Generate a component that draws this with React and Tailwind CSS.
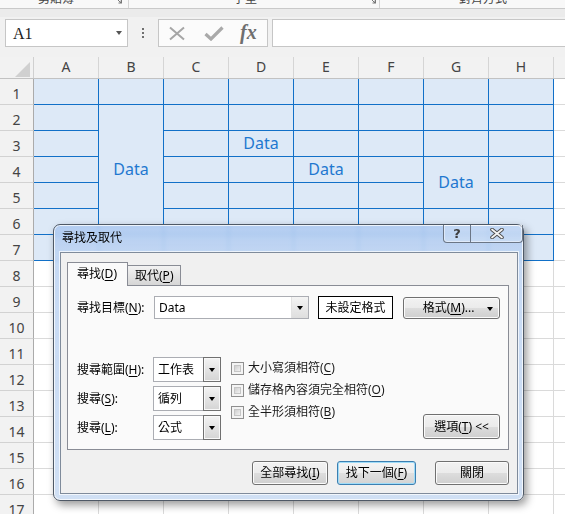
import React from "react";

const COLS = ["A", "B", "C", "D", "E", "F", "G", "H"];
const COVERED = { B3: 1, B4: 1, B5: 1, B6: 1, G5: 1 };
const DATA = { B2: 1, D3: 1, E4: 1, G4: 1 };

function U({ children }) {
  return <span className="underline decoration-1 underline-offset-[2px]">{children}</span>;
}

function Tri({ cls = "border-t-[#000]" }) {
  return (
    <span
      className={
        "block w-0 h-0 border-l-[3.5px] border-r-[3.5px] border-t-[4px] border-l-transparent border-r-transparent " +
        cls
      }
    />
  );
}

function Launcher() {
  return (
    <svg width="8" height="8" viewBox="0 0 8 8" className="block">
      <path d="M0.5 0.5H6.5V6.5" fill="none" stroke="#777" strokeWidth="1" />
      <path d="M2 2L6 6M3.5 6H6V3.5" fill="none" stroke="#777" strokeWidth="1" />
    </svg>
  );
}

const btn =
  "flex items-center justify-center rounded-[3px] border border-[#707070] bg-[linear-gradient(to_bottom,#f2f2f2_0%,#ebebeb_50%,#dddddd_50%,#cfcfcf_100%)] shadow-[inset_0_0_0_1px_#fbfbfb] text-[12px] leading-[14px] text-black";

function OptCombo({ value }) {
  return (
    <div className="flex w-[68px] h-[25px]">
      <div className="flex-1 border border-r-0 border-[#abadb3] bg-white flex items-center pl-[4px] text-[12px] leading-[14px]">
        {value}
      </div>
      <div className="w-[18px] border border-[#707070] bg-[linear-gradient(to_bottom,#f3f3f3,#d4d4d4)] shadow-[inset_0_0_0_1px_#f8f8f8] flex items-center justify-center">
        <Tri />
      </div>
    </div>
  );
}

function Check({ children }) {
  return (
    <div className="h-[22px] flex items-center">
      <div className="w-[13px] h-[13px] border border-[#8f8f8f] bg-[#f4f4f4] p-[2px]">
        <div className="w-full h-full border border-[#c6c6c6] bg-[linear-gradient(135deg,#cfcfcf,#f2f2f2)]" />
      </div>
      <span className="ml-[4px] text-[12px] leading-[14px] text-[#1a1a1a]">{children}</span>
    </div>
  );
}

function Dialog() {
  return (
    <div className="absolute left-[53px] top-[224px] w-[471px] h-[277px] rounded-[7px] border border-[#4f5966] bg-[linear-gradient(to_bottom,rgba(172,200,240,0.85),rgba(190,212,242,0.88)_30px,rgba(204,221,243,0.92))] backdrop-blur-[2px] shadow-[inset_0_0_0_1px_rgba(255,255,255,0.75),3px_4px_9px_rgba(0,0,0,0.4)] flex flex-col">
      <div className="h-[27px] flex items-start justify-between">
        <div className="pl-[8px] pt-[5px] text-[12px] leading-[16px] text-black">尋找及取代</div>
        <div className="h-[18px] flex border border-t-0 border-[#6b7686] rounded-b-[4px] bg-[rgba(255,255,255,0.18)] shadow-[inset_0_0_0_1px_rgba(255,255,255,0.45)]">
          <div className="w-[27px] border-r border-[#6b7686] flex items-center justify-center text-[13px] leading-none font-bold text-[#3d3d3d] font-['DejaVu_Sans',sans-serif]">
            ?
          </div>
          <div className="w-[51px] flex items-center justify-center">
            <svg width="14" height="11" viewBox="0 0 14 11">
              <path
                d="M2 1.5L12 9.5M12 1.5L2 9.5"
                stroke="#4a4a4a"
                strokeWidth="3.6"
                strokeLinecap="round"
              />
              <path
                d="M2 1.5L12 9.5M12 1.5L2 9.5"
                stroke="#f4f4f4"
                strokeWidth="1.8"
                strokeLinecap="round"
              />
            </svg>
          </div>
        </div>
      </div>

      <div className="ml-[6px] mr-[5px] h-[242px] border border-[#7f8b9b] bg-[#f0f0f0] shadow-[0_0_0_1px_rgba(255,255,255,0.7)] flex flex-col">
        {/* tabs */}
        <div className="h-[32px] pt-[9px] pl-[6px] flex items-end">
          <div className="relative z-10 -mb-[1px] w-[61px] h-[24px] border border-b-0 border-[#898c95] bg-[#fafafa] flex items-center pl-[9px] pb-[1px] text-[12px] leading-[14px]">
            尋找(<U>D</U>)
          </div>
          <div className="w-[53px] h-[20px] border border-l-0 border-b-0 border-[#898c95] bg-[linear-gradient(to_bottom,#f2f2f2,#d6d6d6)] flex items-center pl-[7px] text-[12px] leading-[14px]">
            取代(<U>P</U>)
          </div>
        </div>

        {/* panel */}
        <div className="ml-[6px] w-[442px] h-[165px] border border-[#898c95] bg-[#fafafa] pt-[10px] pl-[9px] pr-[8px] flex flex-col">
          <div className="flex items-center h-[23px]">
            <div className="w-[77px] text-[12px] leading-[14px]">
              尋找目標(<U>N</U>):
            </div>
            <div className="w-[155px] h-[23px] border border-[#abadb3] bg-white flex items-stretch">
              <div className="flex-1 flex items-center pl-[4px] text-[12px] leading-[14px]">Data</div>
              <div className="w-[17px] bg-[linear-gradient(to_bottom,#f4f4f4,#dedede)] border-l border-[#e2e2e2] flex items-center justify-center">
                <Tri />
              </div>
            </div>
            <div className="ml-[9px] w-[75px] h-[23px] border border-black bg-white flex items-center justify-center text-[12px] leading-[14px]">
              未設定格式
            </div>
            <div className={"ml-[10px] w-[97px] h-[22px] relative " + btn}>
              <span className="-ml-[6px]">
                格式(<U>M</U>)...
              </span>
              <span className="absolute right-[6px] top-[9px]">
                <Tri />
              </span>
            </div>
          </div>

          <div className="mt-[38px] flex items-end">
            <div className="flex flex-col gap-[4px]">
              <div className="flex items-center h-[25px]">
                <div className="w-[76px] text-[12px] leading-[14px]">
                  搜尋範圍(<U>H</U>):
                </div>
                <OptCombo value="工作表" />
              </div>
              <div className="flex items-center h-[25px]">
                <div className="w-[76px] text-[12px] leading-[14px]">
                  搜尋(<U>S</U>):
                </div>
                <OptCombo value="循列" />
              </div>
              <div className="flex items-center h-[25px]">
                <div className="w-[76px] text-[12px] leading-[14px]">
                  搜尋(<U>L</U>):
                </div>
                <OptCombo value="公式" />
              </div>
            </div>
            <div className="ml-[10px] self-start flex flex-col">
              <Check>
                大小寫須相符(<U>C</U>)
              </Check>
              <Check>
                儲存格內容須完全相符(<U>O</U>)
              </Check>
              <Check>
                全半形須相符(<U>B</U>)
              </Check>
            </div>
            <div className={"ml-auto mb-[1px] w-[77px] h-[25px] " + btn}>
              選項(<U>T</U>)&nbsp;&lt;&lt;
            </div>
          </div>
        </div>

        {/* bottom buttons */}
        <div className="mt-[11px] pr-[8px] flex justify-end">
          <div className={"w-[76px] h-[24px] " + btn}>
            全部尋找(<U>I</U>)
          </div>
          <div className="ml-[9px] w-[79px] h-[24px] flex items-center justify-center rounded-[3px] border border-[#3c7fb1] bg-[linear-gradient(to_bottom,#f4f4f4_0%,#ececec_50%,#e0e0e0_50%,#d3d3d3_100%)] shadow-[inset_0_0_0_1px_#9fdcf8] text-[12px] leading-[14px]">
            找下一個(<U>F</U>)
          </div>
          <div className={"ml-[19px] w-[74px] h-[24px] " + btn}>關閉</div>
        </div>
      </div>
    </div>
  );
}

function TopArea() {
  return (
    <div className="h-[57px] bg-[#f1f1f1] flex flex-col">
      <div className="h-[9px] bg-[#f8f8f8] border-b border-[#c9c9c9] flex overflow-hidden text-[12px] leading-[12px] text-[#444]">
        <div className="w-[129px] border-r border-[#d4d4d4] flex items-start">
          <span className="ml-[38px] -mt-[7px]">剪貼簿</span>
          <span className="ml-auto mr-[5px] -mt-[3px]">
            <Launcher />
          </span>
        </div>
        <div className="w-[251px] border-r border-[#d4d4d4] flex items-start">
          <span className="ml-[104px] -mt-[7px]">字型</span>
          <span className="ml-auto mr-[2px] -mt-[3px]">
            <Launcher />
          </span>
        </div>
        <div className="flex-1 flex items-start">
          <span className="ml-[79px] -mt-[7px]">對齊方式</span>
        </div>
      </div>
      <div className="h-[8px] bg-[#ebebeb]" />
      <div className="flex-1 flex items-start pt-[2px]">
        <div className="ml-[5px] w-[123px] h-[28px] border border-[#c6c6c6] bg-white flex items-center pl-[7px] pr-[5px]">
          <span className="text-[16px] leading-none text-[#222] font-['Liberation_Serif',serif] pt-[1px]">A1</span>
          <span className="ml-auto">
            <Tri cls="border-t-[#555]" />
          </span>
        </div>
        <div className="w-[30px] h-[28px] flex flex-col items-center justify-center gap-[2px]">
          <span className="w-[2px] h-[2px] bg-[#6f6f6f]" />
          <span className="w-[2px] h-[2px] bg-[#6f6f6f]" />
          <span className="w-[2px] h-[2px] bg-[#6f6f6f]" />
        </div>
        <div className="w-[110px] h-[28px] border border-[#c6c6c6] bg-[#fbfbfb] flex items-center">
          <svg width="18" height="15" viewBox="0 0 18 15" className="ml-[9px]">
            <path d="M2 1.5L16 13.5M16 1.5L2 13.5" stroke="#a6a6a6" strokeWidth="2" />
          </svg>
          <svg width="20" height="15" viewBox="0 0 20 15" className="ml-[18px]">
            <path d="M1.5 8L7 13L18.5 1.5" fill="none" stroke="#a9a9a9" strokeWidth="3.2" />
          </svg>
          <span className="ml-[16px] text-[20px] leading-none italic font-bold text-[#6f6f6f] font-['Liberation_Serif',serif] -mt-[2px]">
            fx
          </span>
        </div>
        <div className="ml-[4px] flex-1 -mr-[2px] h-[28px] border border-[#c6c6c6] bg-white" />
      </div>
    </div>
  );
}

function Sheet() {
  const rows = Array.from({ length: 17 }, (_, i) => i + 1);
  const cells = [];
  rows.forEach((r) => {
    cells.push(
      <div
        key={"h" + r}
        className="bg-[#f2f2f2] border-r border-r-[#ababab] border-b border-b-[#d2d2d2] flex justify-center items-start pt-[8px] text-[14px] leading-[14px] text-[#444]"
      >
        {r}
      </div>
    );
    COLS.forEach((c) => {
      const n = c + r;
      if (COVERED[n]) return;
      const hl = r <= 7;
      let cls = hl
        ? "bg-[#dde9f7] border-r border-b border-[#1170c8]"
        : "bg-white border-r border-b border-[#dadada]";
      if (n === "B2") cls += " row-span-5";
      if (n === "G4") cls += " row-span-2";
      cells.push(
        <div key={n} className={cls + " flex items-center justify-center"}>
          {DATA[n] ? (
            <span className="text-[16px] leading-none text-[#1f78d0] pb-[1px]">Data</span>
          ) : null}
        </div>
      );
    });
    cells.push(<div key={"r" + r} className="bg-white border-b border-[#dadada]" />);
  });

  return (
    <div>
      <div className="h-[22px] grid grid-cols-[34px_repeat(8,65px)_1fr] bg-[#f2f2f2] border-b border-[#c2c2c2]">
        <div className="relative border-r border-[#d0d0d0]">
          <div className="absolute right-[3px] bottom-[2px] w-0 h-0 border-l-[14px] border-t-[14px] border-l-transparent border-t-transparent border-b-0 border-r-0 border-b-[#cfcfcf]">
          </div>
          <svg width="15" height="15" viewBox="0 0 15 15" className="absolute right-[3px] bottom-[1px]">
            <path d="M15 0V15H0Z" fill="#d0d0d0" />
          </svg>
        </div>
        {COLS.map((c) => (
          <div
            key={c}
            className="border-r border-[#d5d5d5] flex justify-center items-start pt-[3px] text-[14px] leading-[14px] text-[#444]"
          >
            {c}
          </div>
        ))}
        <div />
      </div>
      <div className="grid grid-cols-[34px_repeat(8,65px)_1fr] auto-rows-[26px]">{cells}</div>
    </div>
  );
}

export default function App() {
  return (
    <div className="relative w-[565px] h-[514px] overflow-hidden bg-white font-['Noto_Sans','Noto_Sans_CJK_TC',sans-serif] text-black">
      <TopArea />
      <Sheet />
      <Dialog />
    </div>
  );
}
